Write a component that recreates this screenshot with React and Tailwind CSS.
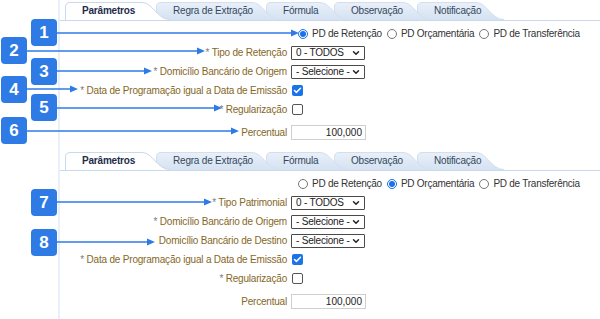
import React from 'react';
import { ChevronDown, Check } from 'lucide-react';

const TABS = [
  { label: 'Parâmetros', w: 105, cls: 'w-[105px] z-[6]', active: true },
  { label: 'Regra de Extração', w: 124, cls: 'w-[124px] z-[5]' },
  { label: 'Fórmula', w: 82, cls: 'w-[82px] z-[4]' },
  { label: 'Observação', w: 97, cls: 'w-[97px] z-[3]' },
  { label: 'Notificação', w: 87, cls: 'w-[87px] z-[2]' },
];

function Tab({ label, w, cls, active }) {
  const fill = `M0.5,18 L0.5,5 Q0.5,0.5 5,0.5 L${w - 28},0.5 C${w - 17},0.5 ${w - 13},17.5 ${w},17.5 L${w},18 Z`;
  const edge = `M0.5,18 L0.5,5 Q0.5,0.5 5,0.5 L${w - 28},0.5 C${w - 17},0.5 ${w - 13},17.5 ${w},17.5`;
  return (
    <div className={`relative ${cls} h-[18px] -mr-[14px] flex items-center pl-[17px] shrink-0`}>
      <svg className="absolute left-0 top-0" width={w} height={18}>
        <defs>
          <linearGradient id="tabgrad" x1="0" y1="0" x2="0" y2="1">
            <stop offset="0" stopColor="#e9f0f9" />
            <stop offset="1" stopColor="#d5e2f2" />
          </linearGradient>
        </defs>
        <path d={fill} fill={active ? '#ffffff' : 'url(#tabgrad)'} />
        <path d={edge} fill="none" stroke={active ? '#c9d8ea' : '#d3dfee'} strokeWidth="1" />
      </svg>
      <span
        className={`relative text-[10px] tracking-[-0.2px] leading-none ${
          active ? 'font-bold text-[#1d2c4c]' : 'text-[#34475c]'
        }`}
      >
        {label}
      </span>
    </div>
  );
}

function Radio({ checked, label }) {
  return (
    <div className="flex items-center">
      {checked ? (
        <span className="w-[10px] h-[10px] rounded-full border border-[#1a73e8] bg-white flex items-center justify-center">
          <span className="w-[6px] h-[6px] rounded-full bg-[#1a73e8]" />
        </span>
      ) : (
        <span className="w-[10px] h-[10px] rounded-full border border-[#767676] bg-white" />
      )}
      <span className="ml-[4px] mr-[5px] text-[10px] tracking-[-0.25px] text-[#333]">{label}</span>
    </div>
  );
}

function Row({ label, req, children, className = '' }) {
  return (
    <div className={`flex items-center h-[19px] ${className}`}>
      <div className="w-[231px] pr-[4px] text-right text-[10px] tracking-[-0.2px] whitespace-nowrap">
        {req && <span className="text-[#7a7a7a]">* </span>}
        <span className="text-[#85671f]">{label}</span>
      </div>
      {children}
    </div>
  );
}

function Select({ value }) {
  return (
    <div className="w-[74px] h-[14px] border border-[#4a4a4a] rounded-[1px] bg-white flex items-center pl-[4px] pr-[3px]">
      <span className="flex-1 text-[10px] tracking-[-0.2px] text-[#222] leading-none whitespace-nowrap overflow-hidden">
        {value}
      </span>
      <ChevronDown size={10} strokeWidth={3.5} className="text-[#222] shrink-0" />
    </div>
  );
}

function Checkbox({ checked }) {
  return checked ? (
    <span className="ml-[1px] w-[11px] h-[11px] rounded-[2px] bg-[#1a73e8] flex items-center justify-center">
      <Check size={9} strokeWidth={4} className="text-white" />
    </span>
  ) : (
    <span className="ml-[1px] w-[11px] h-[11px] rounded-[2px] border border-[#555] bg-white" />
  );
}

function Percent() {
  return (
    <div className="w-[75px] h-[15px] border border-[#cfcfcf] bg-white flex items-center justify-end pr-[3px] text-[10px] text-[#222]">
      100,000
    </div>
  );
}

function Panel({ variant, className = '' }) {
  const first = variant === 1;
  return (
    <div className={className}>
      <div className="h-[18px] border-b border-[#c9d8ea] flex items-end pl-[5px]">
        {TABS.map((t) => (
          <Tab key={t.label} {...t} />
        ))}
      </div>
      <div className="pt-[3px]">
        <div className="flex items-center h-[19px] pl-[238px]">
          <Radio checked={first} label="PD de Retenção" />
          <Radio checked={!first} label="PD Orçamentária" />
          <Radio label="PD de Transferência" />
        </div>
        {first ? (
          <>
            <Row req label="Tipo de Retenção"><Select value="0 - TODOS" /></Row>
            <Row req label="Domicílio Bancário de Origem"><Select value="- Selecione -" /></Row>
          </>
        ) : (
          <>
            <Row req label="Tipo Patrimonial"><Select value="0 - TODOS" /></Row>
            <Row req label="Domicílio Bancário de Origem"><Select value="- Selecione -" /></Row>
            <Row label="Domicílio Bancário de Destino"><Select value="- Selecione -" /></Row>
          </>
        )}
        <Row req label="Data de Programação igual a Data de Emissão"><Checkbox checked /></Row>
        <Row req label="Regularização"><Checkbox /></Row>
        <Row label="Percentual" className="mt-[4px]"><Percent /></Row>
      </div>
    </div>
  );
}

const BADGES = [
  { n: 1, cls: 'left-[31px] top-[19px]' },
  { n: 2, cls: 'left-[1px] top-[37px]' },
  { n: 3, cls: 'left-[31px] top-[58px]' },
  { n: 4, cls: 'left-[1px] top-[76px]' },
  { n: 5, cls: 'left-[31px] top-[94px]' },
  { n: 6, cls: 'left-[1px] top-[117px]' },
  { n: 7, cls: 'left-[31px] top-[189px]' },
  { n: 8, cls: 'left-[31px] top-[229px]' },
];

// x1, x2 (tip), y
const ARROWS = [
  [57, 299, 33],
  [27, 205, 51],
  [57, 152, 71],
  [27, 78, 89],
  [57, 222, 108],
  [27, 239, 131],
  [57, 212, 202],
  [57, 155, 242],
];

export default function App() {
  return (
    <div className="relative w-[600px] h-[319px] bg-white overflow-hidden font-['Liberation_Sans',Arial,sans-serif]">
      <div className="flex h-full">
        <div className="w-[58px] shrink-0" />
        <div className="flex-1 border-l-2 border-[#e9f0f9]">
          <Panel variant={1} className="pt-[3px]" />
          <Panel variant={2} className="mt-[11px]" />
        </div>
      </div>

      {/* annotations */}
      <svg className="absolute left-0 top-0 pointer-events-none" width="600" height="319">
        {ARROWS.map(([x1, x2, y], i) => (
          <g key={i}>
            <line x1={x1} y1={y} x2={x2 - 6} y2={y} stroke="#2f7be6" strokeWidth="1.3" />
            <polygon points={`${x2},${y} ${x2 - 8},${y - 3.5} ${x2 - 8},${y + 3.5}`} fill="#2f7be6" />
          </g>
        ))}
      </svg>
      {BADGES.map((b) => (
        <div
          key={b.n}
          className={`absolute ${b.cls} w-[26px] h-[27px] rounded-[4px] bg-[#2f7be6] text-white font-bold text-[17px] flex items-center justify-center`}
        >
          {b.n}
        </div>
      ))}
    </div>
  );
}
